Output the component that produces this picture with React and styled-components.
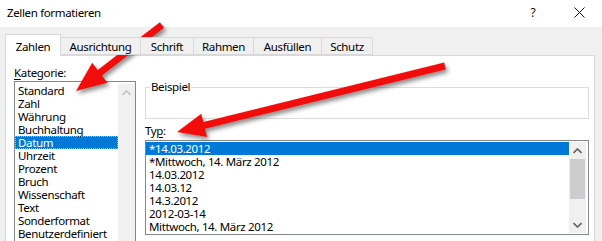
import React from 'react';
import styled, { createGlobalStyle } from 'styled-components';

const GlobalStyle = createGlobalStyle`
  html, body {
    margin: 0;
    padding: 0;
    background: #ffffff;
  }
  body {
    font-family: 'Noto Sans', 'Open Sans', sans-serif;
    font-size: 11.5px;
    letter-spacing: -0.35px;
    color: #000;
  }
`;

const Window = styled.div`
  position: relative;
  width: 602px;
  height: 241px;
  overflow: hidden;
  display: flex;
  flex-direction: column;
  background: #f0f0f0;
`;

const TitleBar = styled.div`
  height: 27px;
  flex: none;
  display: flex;
  align-items: center;
  background: #ffffff;
  padding-left: 7px;
`;

const Title = styled.div`
  line-height: 16px;
  margin-top: -2px;
`;

const TitleButtons = styled.div`
  margin-left: auto;
  display: flex;
  align-items: center;
  margin-top: -3px;
`;

const HelpBtn = styled.div`
  width: 46px;
  text-align: center;
  font-size: 12px;
  color: #111;
`;

const CloseBtn = styled.div`
  width: 46px;
  height: 20px;
  display: flex;
  align-items: center;
  justify-content: center;
`;

const Body = styled.div`
  flex: 1;
  display: flex;
  flex-direction: column;
  padding: 7px 7px 0 5px;
  min-height: 0;
`;

const TabRow = styled.div`
  position: relative;
  z-index: 1;
  display: flex;
  align-items: flex-start;
  height: 22px;
  margin-bottom: -1px;
`;

const Tab = styled.div`
  box-sizing: border-box;
  width: ${(p) => p.$w}px;
  height: ${(p) => (p.$active ? 22 : 18)}px;
  margin-top: ${(p) => (p.$active ? 0 : 3)}px;
  margin-left: -1px;
  &:first-child {
    margin-left: 0;
  }
  border: 1px solid #d9d9d9;
  border-bottom: ${(p) => (p.$active ? 'none' : '1px solid #d9d9d9')};
  background: ${(p) => (p.$active ? '#ffffff' : '#f0f0f0')};
  display: flex;
  justify-content: center;
  align-items: center;
  padding-top: ${(p) => (p.$active ? 1 : 0)}px;
  white-space: nowrap;
`;

const Panel = styled.div`
  flex: 1;
  box-sizing: border-box;
  display: flex;
  gap: 9px;
  background: #ffffff;
  border: 1px solid #d9d9d9;
  border-bottom: none;
  padding: 9px 5px 0 8px;
  min-height: 0;
`;

const LeftCol = styled.div`
  width: 122px;
  flex: none;
  display: flex;
  flex-direction: column;
`;

const RightCol = styled.div`
  width: 444px;
  flex: none;
  display: flex;
  flex-direction: column;
`;

const FieldLabel = styled.div`
  line-height: 16px;
  height: 16px;
  margin-top: ${(p) => p.$mt || 0}px;
  u {
    text-decoration: underline;
    text-underline-offset: 2px;
  }
`;

const ListBox = styled.div`
  box-sizing: border-box;
  display: flex;
  border: 1px solid #828790;
  background: #ffffff;
  height: ${(p) => p.$h}px;
  margin-top: ${(p) => p.$mt || 0}px;
  padding: ${(p) => p.$pt || 1}px 0 1px 0;
  flex: none;
`;

const Items = styled.div`
  flex: 1;
  min-width: 0;
`;

const Item = styled.div`
  box-sizing: border-box;
  height: 13px;
  line-height: 13px;
  padding-left: 3px;
  white-space: nowrap;
  background: ${(p) => (p.$selected ? '#0078d7' : 'transparent')};
  color: ${(p) => (p.$selected ? '#ffffff' : '#000000')};
  outline: ${(p) => (p.$focused ? '1px dotted #ffb347' : 'none')};
  outline-offset: -1px;
`;

const ScrollBar = styled.div`
  width: 17px;
  flex: none;
  background: #f0f0f0;
  display: flex;
  flex-direction: column;
  margin-right: ${(p) => p.$gap || 0}px;
`;

const ScrollButton = styled.div`
  height: 17px;
  flex: none;
  display: flex;
  align-items: center;
  justify-content: center;
`;

const Track = styled.div`
  flex: 1;
  display: flex;
  flex-direction: column;
`;

const Thumb = styled.div`
  height: 40px;
  margin: 0 1px;
  background: #cdcdcd;
`;

const GroupBox = styled.div`
  box-sizing: border-box;
  margin-top: 22px;
  height: 32px;
  border: 1px solid #dcdcdc;
`;

const Legend = styled.div`
  width: fit-content;
  margin: -8px 0 0 4px;
  padding: 0 1px;
  line-height: 14px;
  background: #ffffff;
`;

const Overlay = styled.svg`
  position: absolute;
  left: 0;
  top: 0;
  pointer-events: none;
`;

const Chevron = ({ up, color }) => (
  <svg width="9" height="6" viewBox="0 0 9 6">
    <polyline
      points={up ? '0.5,5 4.5,1 8.5,5' : '0.5,1 4.5,5 8.5,1'}
      fill="none"
      stroke={color}
      strokeWidth="1.6"
    />
  </svg>
);

function arrowPoints([tx, ty], [hx, hy], shaft, headLen, headW) {
  const dx = hx - tx;
  const dy = hy - ty;
  const len = Math.hypot(dx, dy);
  const ux = dx / len;
  const uy = dy / len;
  const nx = -uy;
  const ny = ux;
  const bx = hx - ux * headLen;
  const by = hy - uy * headLen;
  const pts = [
    [tx + nx * shaft / 2, ty + ny * shaft / 2],
    [bx + nx * shaft / 2, by + ny * shaft / 2],
    [bx + nx * headW / 2, by + ny * headW / 2],
    [hx, hy],
    [bx - nx * headW / 2, by - ny * headW / 2],
    [bx - nx * shaft / 2, by - ny * shaft / 2],
    [tx - nx * shaft / 2, ty - ny * shaft / 2],
  ];
  return pts.map((p) => p.map((v) => v.toFixed(1)).join(',')).join(' ');
}

const tabs = [
  { label: 'Zahlen', w: 56, active: true },
  { label: 'Ausrichtung', w: 81 },
  { label: 'Schrift', w: 54 },
  { label: 'Rahmen', w: 61 },
  { label: 'Ausfüllen', w: 69 },
  { label: 'Schutz', w: 52 },
];

const categories = [
  'Standard', 'Zahl', 'Währung', 'Buchhaltung', 'Datum', 'Uhrzeit',
  'Prozent', 'Bruch', 'Wissenschaft', 'Text', 'Sonderformat', 'Benutzerdefiniert',
];

const types = [
  '*14.03.2012',
  '*Mittwoch, 14. März 2012',
  '14.03.2012',
  '14.03.12',
  '14.3.2012',
  '2012-03-14',
  'Mittwoch, 14. März 2012',
];

const App = () => {
  return (
    <>
      <GlobalStyle />
      <Window>
        <TitleBar>
          <Title>Zellen formatieren</Title>
          <TitleButtons>
            <HelpBtn>?</HelpBtn>
            <CloseBtn>
              <svg width="11" height="11" viewBox="0 0 11 11">
                <path d="M0.5 0.5 L10.5 10.5 M10.5 0.5 L0.5 10.5" stroke="#111" strokeWidth="1" />
              </svg>
            </CloseBtn>
          </TitleButtons>
        </TitleBar>
        <Body>
          <TabRow>
            {tabs.map((t) => (
              <Tab key={t.label} $w={t.w} $active={t.active}>{t.label}</Tab>
            ))}
          </TabRow>
          <Panel>
            <LeftCol>
              <FieldLabel><u>K</u>ategorie:</FieldLabel>
              <ListBox $h={200} $pt={2}>
                <Items>
                  {categories.map((c) => (
                    <Item key={c} $selected={c === 'Datum'} $focused={c === 'Datum'}>{c}</Item>
                  ))}
                </Items>
                <ScrollBar>
                  <ScrollButton><Chevron up color="#c2c2c2" /></ScrollButton>
                  <Track />
                </ScrollBar>
              </ListBox>
            </LeftCol>
            <RightCol>
              <GroupBox>
                <Legend>Beispiel</Legend>
              </GroupBox>
              <FieldLabel $mt={4}>Ty<u>p</u>:</FieldLabel>
              <ListBox $h={95} $mt={1}>
                <Items>
                  {types.map((t, i) => (
                    <Item key={t} $selected={i === 0}>{t}</Item>
                  ))}
                </Items>
                <ScrollBar $gap={2}>
                  <ScrollButton><Chevron up color="#606060" /></ScrollButton>
                  <Track><Thumb /></Track>
                  <ScrollButton><Chevron color="#606060" /></ScrollButton>
                </ScrollBar>
              </ListBox>
            </RightCol>
          </Panel>
        </Body>
        <Overlay width="602" height="241" viewBox="0 0 602 241">
          <defs>
            <filter id="shadow" x="-20%" y="-20%" width="140%" height="140%">
              <feDropShadow dx="2" dy="3" stdDeviation="2" floodColor="#000" floodOpacity="0.45" />
            </filter>
          </defs>
          <g filter="url(#shadow)" fill="#f20f0f">
            <polygon points={arrowPoints([162, 25], [76, 91], 7, 30, 25)} />
            <polygon points={arrowPoints([445, 66], [177, 132], 7, 28, 24)} />
          </g>
        </Overlay>
      </Window>
    </>
  );
};

export default App;
